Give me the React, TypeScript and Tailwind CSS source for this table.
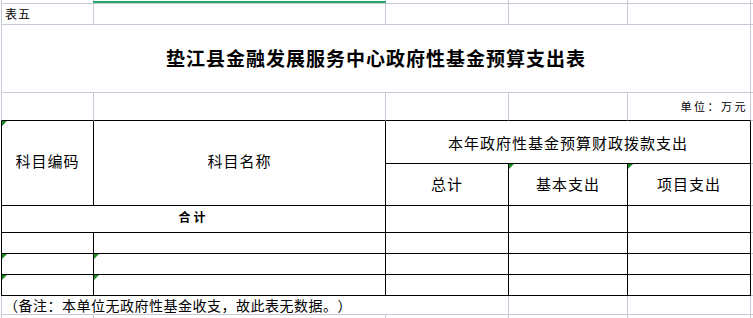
import React from "react";

const G = "border-[#c5c9d8]";
const FONT = { fontFamily: '"Noto Sans CJK SC", "Noto Sans", sans-serif' };

function Tri() {
  return (
    <svg className="absolute left-0 top-0" width="5" height="5" viewBox="0 0 5 5">
      <polygon points="0,0 5,0 0,5" fill="#1f8a1f" />
    </svg>
  );
}

export default function App() {
  return (
    <div className="w-[753px] h-[318px] overflow-hidden bg-white text-black" style={FONT}>
      <div className="ml-[1px] h-[318px] grid grid-cols-[93px_292px_123px_119px_123px_1fr] grid-rows-[4px_21px_68px_28px_43px_42px_27px_21px_21px_21px_19px_1fr]">
        {/* row 0 */}
        <div className={`col-start-1 row-start-1 border-l border-r border-b ${G}`} />
        <div className={`col-start-2 row-start-1 border-r border-b ${G} relative`}>
          <div className="absolute left-[-1px] right-[-1px] top-[1px] h-[2px] bg-[#27a86a]" />
        </div>
        <div className={`col-start-3 row-start-1 border-r border-b ${G}`} />
        <div className={`col-start-4 row-start-1 border-r border-b ${G}`} />
        <div className={`col-start-5 row-start-1 border-r border-b ${G}`} />
        <div className={`col-start-6 row-start-1 border-b ${G}`} />

        {/* row 1 */}
        <div className={`col-start-1 row-start-2 border-l border-r border-b ${G} flex items-center pl-[3px] text-[12px] tracking-[1px]`}>表五</div>
        <div className={`col-start-2 row-start-2 border-r border-b ${G}`} />
        <div className={`col-start-3 row-start-2 border-r border-b ${G}`} />
        <div className={`col-start-4 row-start-2 border-r border-b ${G}`} />
        <div className={`col-start-5 row-start-2 border-r border-b ${G}`} />
        <div className={`col-start-6 row-start-2 border-b ${G}`} />

        {/* row 2 title */}
        <div className={`col-start-1 col-span-5 row-start-3 border-l border-r border-b ${G} flex items-center justify-center text-[19px] font-bold tracking-[1px]`}>
          垫江县金融发展服务中心政府性基金预算支出表
        </div>
        <div className={`col-start-6 row-start-3 border-b ${G}`} />

        {/* row 3 unit */}
        <div className={`col-start-1 row-start-4 border-l ${G} border-r border-r-[#c5c9d8] border-b border-b-black`} />
        <div className={`col-start-2 row-start-4 border-r border-r-[#c5c9d8] border-b border-b-black`} />
        <div className={`col-start-3 row-start-4 border-r border-r-[#c5c9d8] border-b border-b-black`} />
        <div className={`col-start-4 row-start-4 border-r border-r-[#c5c9d8] border-b border-b-black`} />
        <div className={`col-start-5 row-start-4 border-r border-r-[#c5c9d8] border-b border-b-black flex items-center justify-end pr-[2px] text-[11px] tracking-[2.5px] [text-spacing-trim:space-all]`}>
          单位：万元
        </div>
        <div className={`col-start-6 row-start-4 border-b ${G}`} />

        {/* header */}
        <div className="col-start-1 row-start-5 row-span-2 border-l border-r border-b border-black relative flex items-center justify-center text-[15px] tracking-[1px] pb-[4px]">
          <Tri />
          科目编码
        </div>
        <div className="col-start-2 row-start-5 row-span-2 border-r border-b border-black flex items-center justify-center text-[15px] tracking-[1px] pb-[4px]">
          科目名称
        </div>
        <div className="col-start-3 col-span-3 row-start-5 border-r border-b border-black flex items-center justify-center text-[15px] tracking-[1px] pt-[2px]">
          本年政府性基金预算财政拨款支出
        </div>
        <div className={`col-start-6 row-start-5 border-b ${G}`} />
        <div className="col-start-3 row-start-6 border-r border-b border-black flex items-center justify-center text-[15px] tracking-[1px]">
          总计
        </div>
        <div className="col-start-4 row-start-6 border-r border-b border-black relative flex items-center justify-center text-[15px] tracking-[1px]">
          <Tri />
          基本支出
        </div>
        <div className="col-start-5 row-start-6 border-r border-b border-black relative flex items-center justify-center text-[15px] tracking-[1px]">
          <Tri />
          项目支出
        </div>
        <div className={`col-start-6 row-start-6 border-b ${G}`} />

        {/* 合计 row */}
        <div className="col-start-1 col-span-2 row-start-7 border-l border-r border-b border-black flex items-center justify-center text-[12px] font-bold tracking-[3px] pb-[4px]">
          合计
        </div>
        <div className="col-start-3 row-start-7 border-r border-b border-black" />
        <div className="col-start-4 row-start-7 border-r border-b border-black" />
        <div className="col-start-5 row-start-7 border-r border-b border-black" />
        <div className={`col-start-6 row-start-7 border-b ${G}`} />

        {/* empty rows */}
        <div className="col-start-1 row-start-8 border-l border-r border-b border-black" />
        <div className="col-start-2 row-start-8 border-r border-b border-black" />
        <div className="col-start-3 row-start-8 border-r border-b border-black" />
        <div className="col-start-4 row-start-8 border-r border-b border-black" />
        <div className="col-start-5 row-start-8 border-r border-b border-black" />
        <div className={`col-start-6 row-start-8 border-b ${G}`} />

        <div className="col-start-1 row-start-9 border-l border-r border-b border-black relative"><Tri /></div>
        <div className="col-start-2 row-start-9 border-r border-b border-black relative"><Tri /></div>
        <div className="col-start-3 row-start-9 border-r border-b border-black" />
        <div className="col-start-4 row-start-9 border-r border-b border-black" />
        <div className="col-start-5 row-start-9 border-r border-b border-black" />
        <div className={`col-start-6 row-start-9 border-b ${G}`} />

        <div className="col-start-1 row-start-10 border-l border-r border-b border-black relative"><Tri /></div>
        <div className="col-start-2 row-start-10 border-r border-b border-black relative"><Tri /></div>
        <div className="col-start-3 row-start-10 border-r border-b border-black" />
        <div className="col-start-4 row-start-10 border-r border-b border-black" />
        <div className="col-start-5 row-start-10 border-r border-b border-black" />
        <div className={`col-start-6 row-start-10 border-b ${G}`} />

        {/* footer note */}
        <div className={`col-start-1 col-span-3 row-start-11 border-l border-r border-b ${G} flex items-center pl-[2px] text-[14px] tracking-[0.5px] whitespace-nowrap [text-spacing-trim:space-all]`}>
          （备注：本单位无政府性基金收支，故此表无数据。）
        </div>
        <div className={`col-start-4 row-start-11 border-r border-b ${G}`} />
        <div className={`col-start-5 row-start-11 border-r border-b ${G}`} />
        <div className={`col-start-6 row-start-11 border-b ${G}`} />

        {/* last partial row */}
        <div className={`col-start-1 row-start-12 border-l border-r ${G}`} />
        <div className={`col-start-2 row-start-12 border-r ${G}`} />
        <div className={`col-start-3 row-start-12 border-r ${G}`} />
        <div className={`col-start-4 row-start-12 border-r ${G}`} />
        <div className={`col-start-5 row-start-12 border-r ${G}`} />
        <div className="col-start-6 row-start-12" />
      </div>
    </div>
  );
}
